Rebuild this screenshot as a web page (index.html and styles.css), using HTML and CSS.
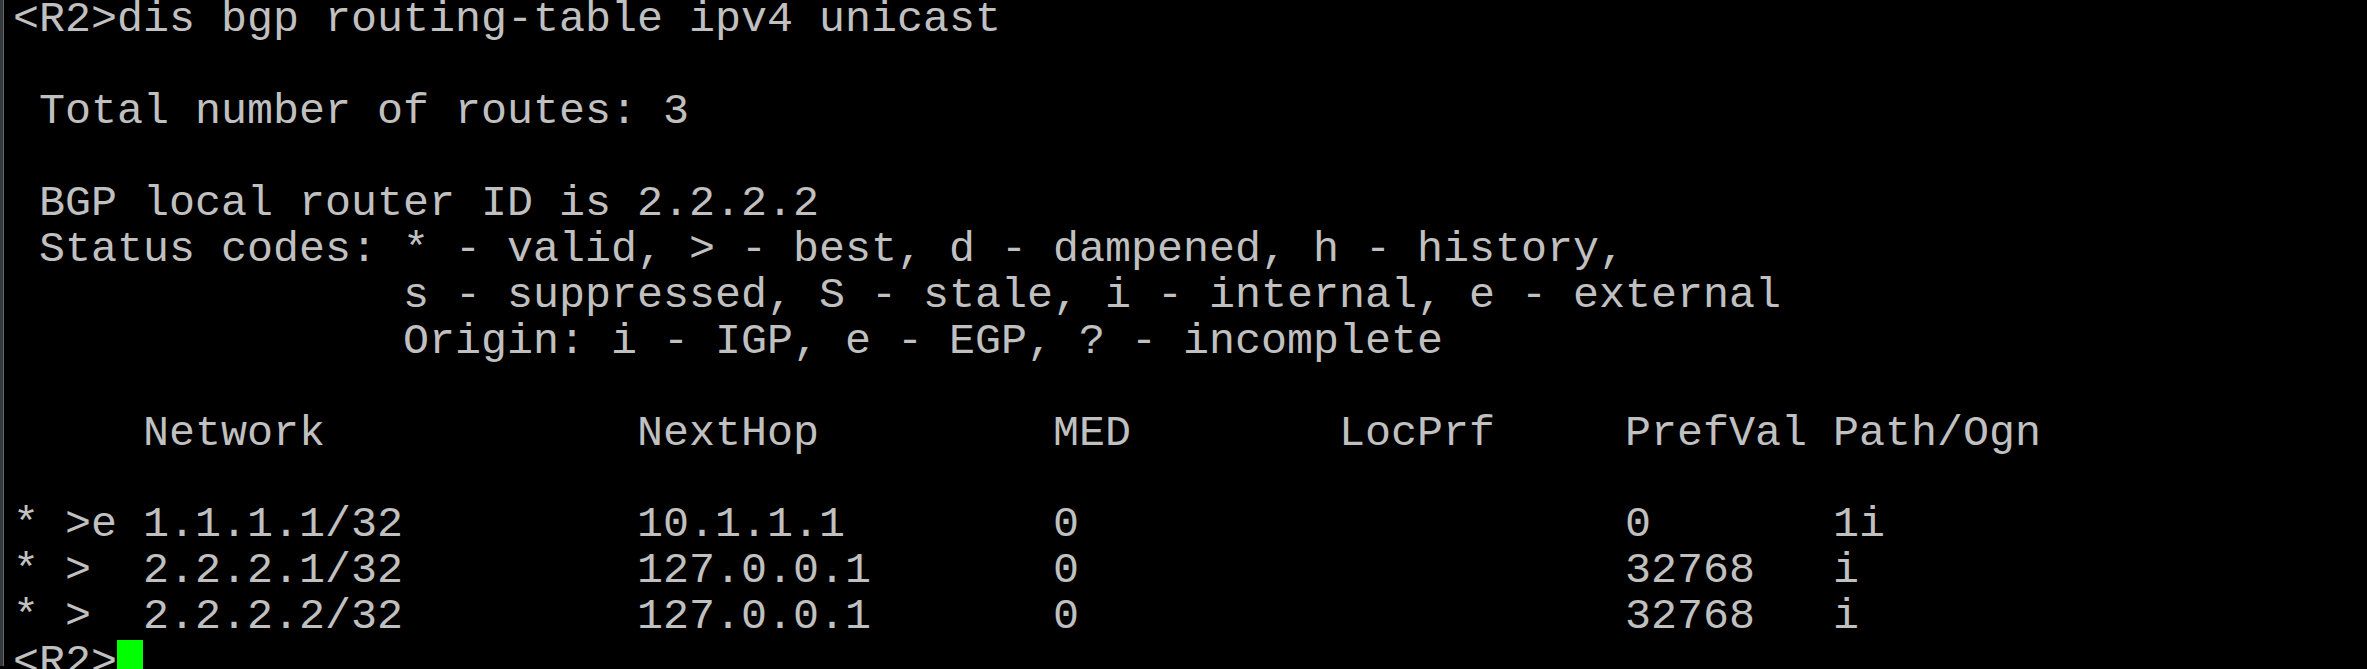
FILE: index.html
```html
<!DOCTYPE html>
<html>
<head>
<meta charset="utf-8">
<link rel="stylesheet" href="styles.css">
</head>
<body>
<div class="frame">
<div class="screen">
<pre class="term">&lt;R2&gt;dis bgp routing-table ipv4 unicast

 Total number of routes: 3

 BGP local router ID is 2.2.2.2
 Status codes: * - valid, &gt; - best, d - dampened, h - history,
               s - suppressed, S - stale, i - internal, e - external
               Origin: i - IGP, e - EGP, ? - incomplete

     Network            NextHop         MED        LocPrf     PrefVal Path/Ogn

* &gt;e 1.1.1.1/32         10.1.1.1        0                     0       1i
* &gt;  2.2.2.1/32         127.0.0.1       0                     32768   i
* &gt;  2.2.2.2/32         127.0.0.1       0                     32768   i
&lt;R2&gt;<span class="cursor"></span></pre>
</div>
</div>
</body>
</html>
```
FILE: styles.css
```css
html, body {
  margin: 0;
  padding: 0;
  background: #000;
  height: 100%;
  overflow: hidden;
}
.frame {
  height: 100%;
  border-left: 3px solid #35393c;
  box-sizing: border-box;
}
.screen {
  height: 100%;
  border-left: 1px solid #62676b;
  padding-left: 9px;
  box-sizing: border-box;
}
.term {
  margin: -2.6px 0 0 0;
  font-family: "Liberation Mono", "Courier New", monospace;
  font-size: 43.33px;
  line-height: 45.9px;
  color: #c0c0c0;
  white-space: pre;
}
.cursor {
  display: inline-block;
  width: 26px;
  height: 45.9px;
  background: #00ff00;
  vertical-align: top;
}
```
